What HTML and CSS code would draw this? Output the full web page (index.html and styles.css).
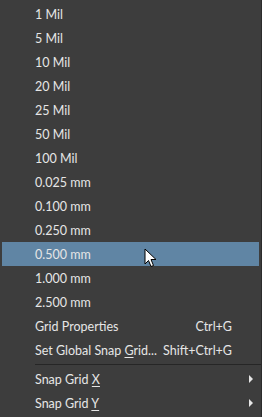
FILE: index.html
```html
<!DOCTYPE html>
<html lang="en">
<head>
  <meta charset="UTF-8" />
  <title>Snap Grid Menu</title>
  <link rel="stylesheet" href="styles.css">
</head>
<body>
  <div class="menu">
    <div class="item"><span class="label">1 Mil</span></div>
    <div class="item"><span class="label">5 Mil</span></div>
    <div class="item"><span class="label">10 Mil</span></div>
    <div class="item"><span class="label">20 Mil</span></div>
    <div class="item"><span class="label">25 Mil</span></div>
    <div class="item"><span class="label">50 Mil</span></div>
    <div class="item"><span class="label">100 Mil</span></div>
    <div class="item"><span class="label">0.025 mm</span></div>
    <div class="item"><span class="label">0.100 mm</span></div>
    <div class="item"><span class="label">0.250 mm</span></div>
    <div class="item active">
      <span class="label">0.500 mm</span>
      <!-- mouse pointer -->
      <svg class="cursor" width="13" height="20" viewBox="0 0 13 20">
        <path d="M1 1 L1 16 L4.5 12.5 L7 18.5 L9.5 17.5 L7 11.5 L12 11.5 Z" fill="#fff" stroke="#000" stroke-width="1"/>
      </svg>
    </div>
    <div class="item"><span class="label">1.000 mm</span></div>
    <div class="item"><span class="label">2.500 mm</span></div>
    <div class="item"><span class="label">Grid Properties</span><span class="key">Ctrl+G</span></div>
    <div class="item"><span class="label">Set Global Snap <u>G</u>rid...</span><span class="key">Shift+Ctrl+G</span></div>
    <div class="sep"></div>
    <div class="item"><span class="label">Snap Grid <u>X</u></span><span class="arrow"></span></div>
    <div class="item"><span class="label">Snap Grid <u>Y</u></span><span class="arrow"></span></div>
  </div>
</body>
</html>
```
FILE: styles.css
```css
* {
  margin: 0;
  padding: 0;
  box-sizing: border-box;
}

body {
  background: #3d3d3d;
  font-family: Lato, 'Noto Sans', sans-serif;
  font-size: 12.5px;
  color: #e6e6e6;
}

.menu {
  width: 262px;
  height: 417px;
  padding: 2px 2px 2px 2px;
  background: #3d3d3d;
  border-right: 1px solid #2c2c2c;
  display: flex;
  flex-direction: column;
}

.item {
  position: relative;
  height: 24px;
  display: flex;
  align-items: center;
  padding-left: 33px;
  padding-right: 27px;
  white-space: nowrap;
}

.item.active {
  background: #6085a4;
}

.label {
  flex: 1;
}

.label u {
  text-decoration-thickness: 1px;
  text-underline-offset: 2px;
}

.key {
  text-align: right;
}

.arrow {
  width: 0;
  height: 0;
  border-top: 4px solid transparent;
  border-bottom: 4px solid transparent;
  border-left: 4px solid #e6e6e6;
  margin-right: -21px;
}

.sep {
  height: 5px;
  margin-left: 33px;
  margin-right: -2px;
  border-top: 2px solid transparent;
  border-bottom: 2px solid transparent;
  background: #262626;
  background-clip: content-box;
}

.cursor {
  position: absolute;
  left: 142px;
  top: 6px;
}
```
